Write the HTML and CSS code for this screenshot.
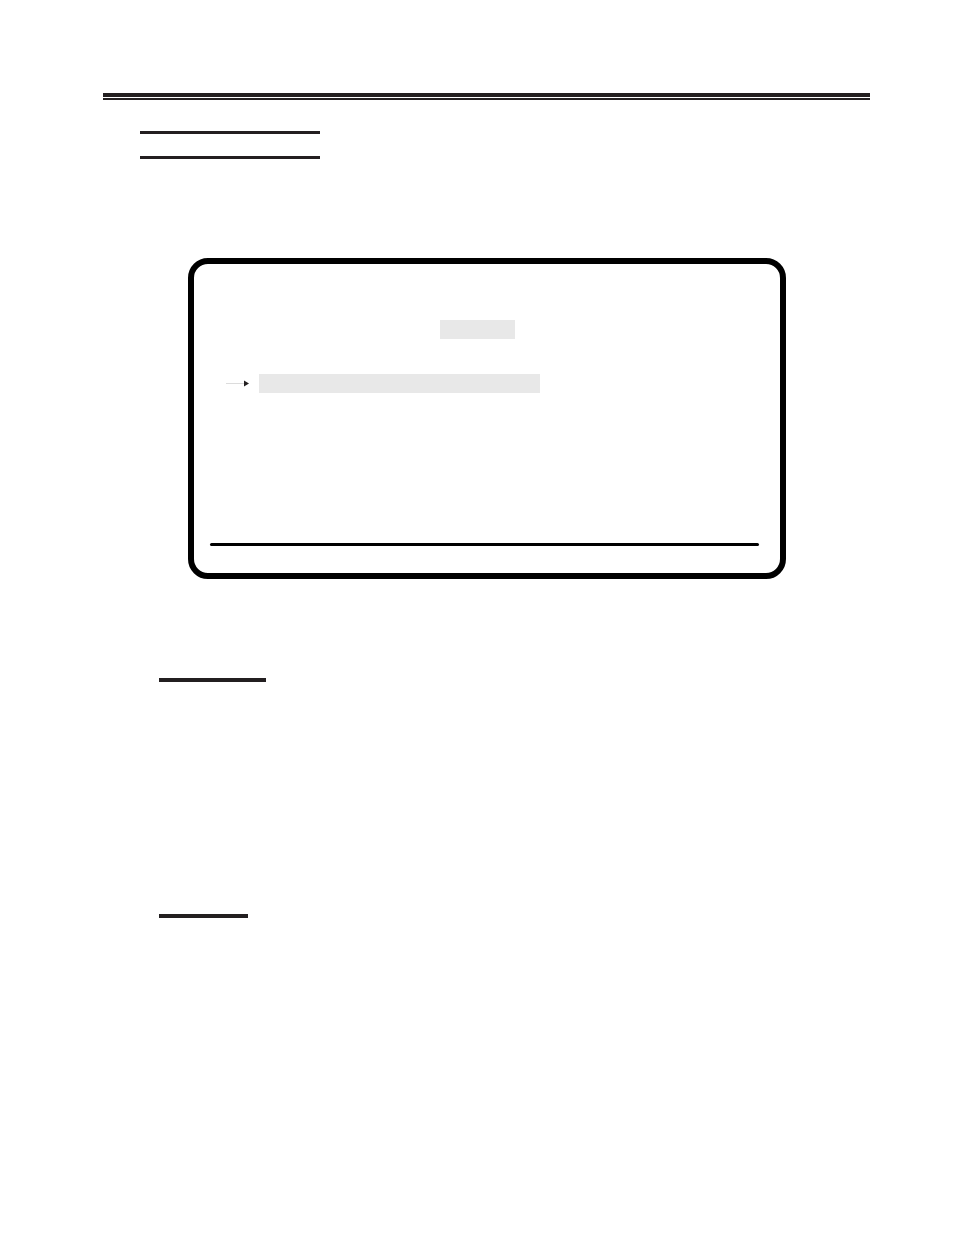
FILE: index.html
```
<!DOCTYPE html>
<html lang="en">

<head>
    <meta charset="utf-8">
    <title>Menu screen</title>
    <link rel="stylesheet" href="styles.css">
</head>

<body>
    <header class="page-rule"></header>
    <main>
        <div class="title-box"></div>
        <div class="screen">
            <div class="screen-title"></div>
            <div class="menu-row">
                <svg class="arrow" width="24" height="7" viewBox="0 0 24 7" aria-hidden="true">
                    <path d="M0 3.5H18" stroke="#dcdcdc" />
                    <path d="M18 .5L23 3.5L18 6.5Z" fill="#231f20" />
                </svg>
                <div class="selection"></div>
            </div>
            <div class="status-rule"></div>
        </div>
        <section class="section section-first">
            <div class="section-rule"></div>
        </section>
        <section class="section">
            <div class="section-rule short"></div>
        </section>
    </main>
</body>

</html>
```
FILE: styles.css
```
body {
    background-color: white;
    font-family: "Liberation Sans", sans-serif;
    margin: 0;
    padding: 93px 84px 80px 103px;
}

/* thick line over a thin one */
.page-rule {
    height: 1px;
    border-top: 4px solid #231f20;
    border-bottom: 2px solid #231f20;
}

.title-box {
    width: 180px;
    height: 22px;
    margin: 31px 0 0 37px;
    border-top: 3px solid #231f20;
    border-bottom: 3px solid #231f20;
}

/* terminal screen */
.screen {
    margin: 99px 84px 0 85px;
    padding: 56px 21px 27px 16px;
    border: 6px solid black;
    border-radius: 20px;
}

.screen-title {
    width: 75px;
    height: 19px;
    margin-left: 230px;
    background-color: #e8e8e8;
}

.menu-row {
    display: flex;
    align-items: center;
    gap: 9px;
    margin: 35px 0 150px 16px;
}

.selection {
    width: 281px;
    height: 19px;
    background-color: #e8e8e8;
}

.status-rule {
    height: 3px;
    border-radius: 2px;
    background-color: black;
}

.section {
    min-height: 236px;
    margin-left: 56px;
}

.section-first {
    margin-top: 99px;
}

.section-rule {
    width: 107px;
    height: 4px;
    background-color: #231f20;
}

.section-rule.short {
    width: 89px;
}
```
